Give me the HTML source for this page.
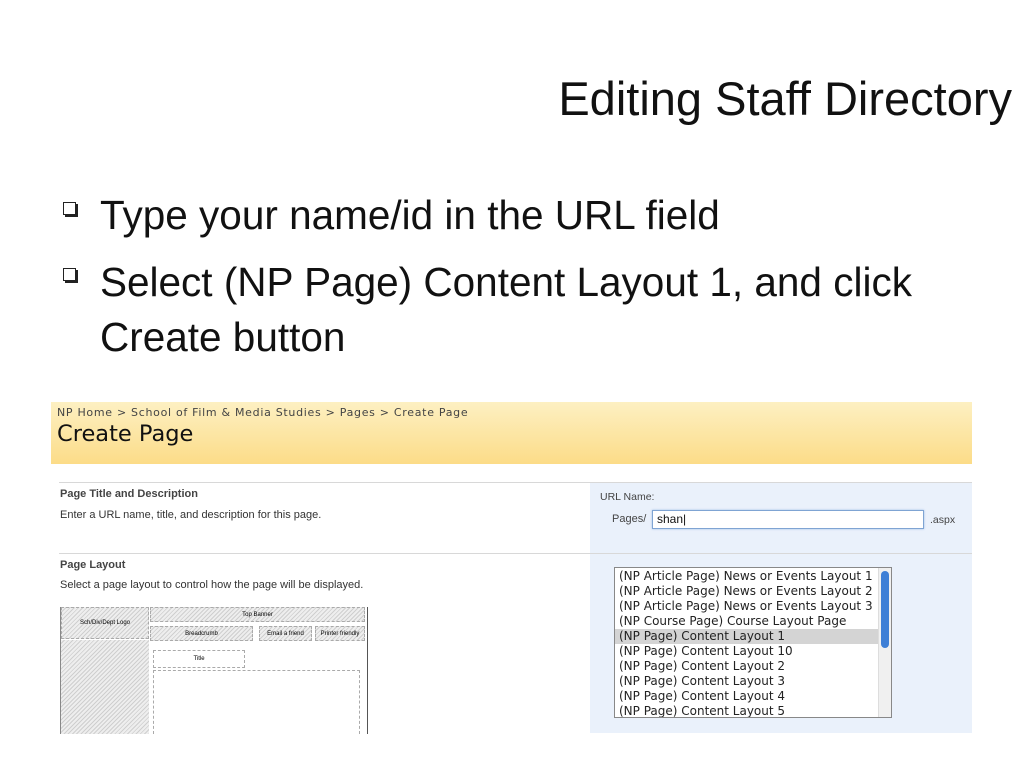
<!DOCTYPE html>
<html><head><style>
body{margin:0;width:1024px;height:768px;background:#fff;position:relative;overflow:hidden;font-family:"Liberation Sans",sans-serif;}
.a{position:absolute;white-space:nowrap}
.t{font-size:47px;color:#111;line-height:56px}
.b{font-size:40.5px;color:#111;line-height:50px}
.sq{position:absolute;width:11px;height:11px;border:1.5px solid #222;box-shadow:2px 2px 0 #222;}
.v{font-family:"DejaVu Sans",sans-serif;}
.hatch{background:repeating-linear-gradient(135deg,#eee 0 2px,#cfcfcf 2px 3px);}
.dot{border:1px dashed #aaa;box-sizing:border-box;}
.opt{height:15px;line-height:15px;padding-left:4px;font-size:12px;color:#222}
</style></head><body>
<div class="a t" style="right:12px;top:71px">Editing Staff Directory</div>
<div class="sq" style="left:63px;top:202px"></div>
<div class="a b" style="left:100px;top:190px">Type your name/id in the URL field</div>
<div class="sq" style="left:63px;top:268px"></div>
<div class="a b" style="left:100px;top:257px">Select (NP Page) Content Layout 1, and click</div>
<div class="a b" style="left:100px;top:312px">Create button</div>

<div class="a" style="left:51px;top:402px;width:921px;height:62px;background:linear-gradient(#fdf0c2,#fcdc88)"></div>
<div class="a v" style="left:57px;top:406px;font-size:11px;color:#444;letter-spacing:.7px">NP Home &gt; School of Film &amp; Media Studies &gt; Pages &gt; Create Page</div>
<div class="a v" style="left:57px;top:421px;font-size:22.5px;color:#111">Create Page</div>

<div class="a" style="left:590px;top:482px;width:382px;height:251px;background:#eaf1fb"></div>
<div class="a" style="left:59px;top:482px;width:913px;height:1px;background:#d8d8d8"></div>
<div class="a" style="left:59px;top:553px;width:913px;height:1px;background:#d8d8d8"></div>
<div class="a" style="left:60px;top:488px;font-size:11px;font-weight:bold;color:#444">Page Title and Description</div>
<div class="a" style="left:60px;top:509px;font-size:11px;color:#333">Enter a URL name, title, and description for this page.</div>
<div class="a" style="left:60px;top:559px;font-size:11px;font-weight:bold;color:#444">Page Layout</div>
<div class="a" style="left:60px;top:579px;font-size:11px;color:#333">Select a page layout to control how the page will be displayed.</div>

<div class="a" style="left:60px;top:607px;width:308px;height:127px;border-right:1px solid #555;border-left:1px solid #888;box-sizing:border-box"></div>
<div class="a hatch dot" style="left:61px;top:607px;width:88px;height:32px;font-size:6px;text-align:center;line-height:30px">Sch/Div/Dept Logo</div>
<div class="a hatch" style="left:61px;top:640px;width:88px;height:94px"></div>
<div class="a hatch dot" style="left:150px;top:607px;width:215px;height:15px;font-size:6px;text-align:center;line-height:14px">Top Banner</div>
<div class="a hatch dot" style="left:150px;top:626px;width:103px;height:15px;font-size:6px;text-align:center;line-height:14px">Breadcrumb</div>
<div class="a hatch dot" style="left:259px;top:626px;width:53px;height:15px;font-size:6px;text-align:center;line-height:14px">Email a friend</div>
<div class="a hatch dot" style="left:315px;top:626px;width:50px;height:15px;font-size:6px;text-align:center;line-height:14px">Printer friendly</div>
<div class="a dot" style="left:153px;top:650px;width:92px;height:18px;font-size:6px;text-align:center;line-height:16px">Title</div>
<div class="a dot" style="left:153px;top:670px;width:207px;height:64px;border-bottom:none"></div>

<div class="a" style="left:600px;top:491px;font-size:10.5px;color:#444">URL Name:</div>
<div class="a" style="left:612px;top:513px;font-size:11px;color:#444">Pages/</div>
<div class="a" style="left:652px;top:510px;width:272px;height:19px;border:1px solid #7fa4d3;box-shadow:0 0 2px #9bbbe4;background:#fff;box-sizing:border-box;font-size:12px;line-height:17px;padding-left:4px;color:#111">shan|</div>
<div class="a" style="left:930px;top:514px;font-size:10.5px;color:#444">.aspx</div>

<div class="a v" style="left:614px;top:567px;width:278px;height:151px;border:1px solid #888;background:#fff;box-sizing:border-box;padding-top:1px;overflow:hidden">
<div class="opt">(NP Article Page) News or Events Layout 1</div>
<div class="opt">(NP Article Page) News or Events Layout 2</div>
<div class="opt">(NP Article Page) News or Events Layout 3</div>
<div class="opt">(NP Course Page) Course Layout Page</div>
<div class="opt" style="background:#d4d4d4;width:260px">(NP Page) Content Layout 1</div>
<div class="opt">(NP Page) Content Layout 10</div>
<div class="opt">(NP Page) Content Layout 2</div>
<div class="opt">(NP Page) Content Layout 3</div>
<div class="opt">(NP Page) Content Layout 4</div>
<div class="opt">(NP Page) Content Layout 5</div>
<div style="position:absolute;right:0;top:0;width:12px;height:149px;background:#f0f0f0;border-left:1px solid #ddd"></div>
<div style="position:absolute;right:2px;top:3px;width:8px;height:77px;background:#3e7fd6;border-radius:4px"></div>
</div>
</body></html>
